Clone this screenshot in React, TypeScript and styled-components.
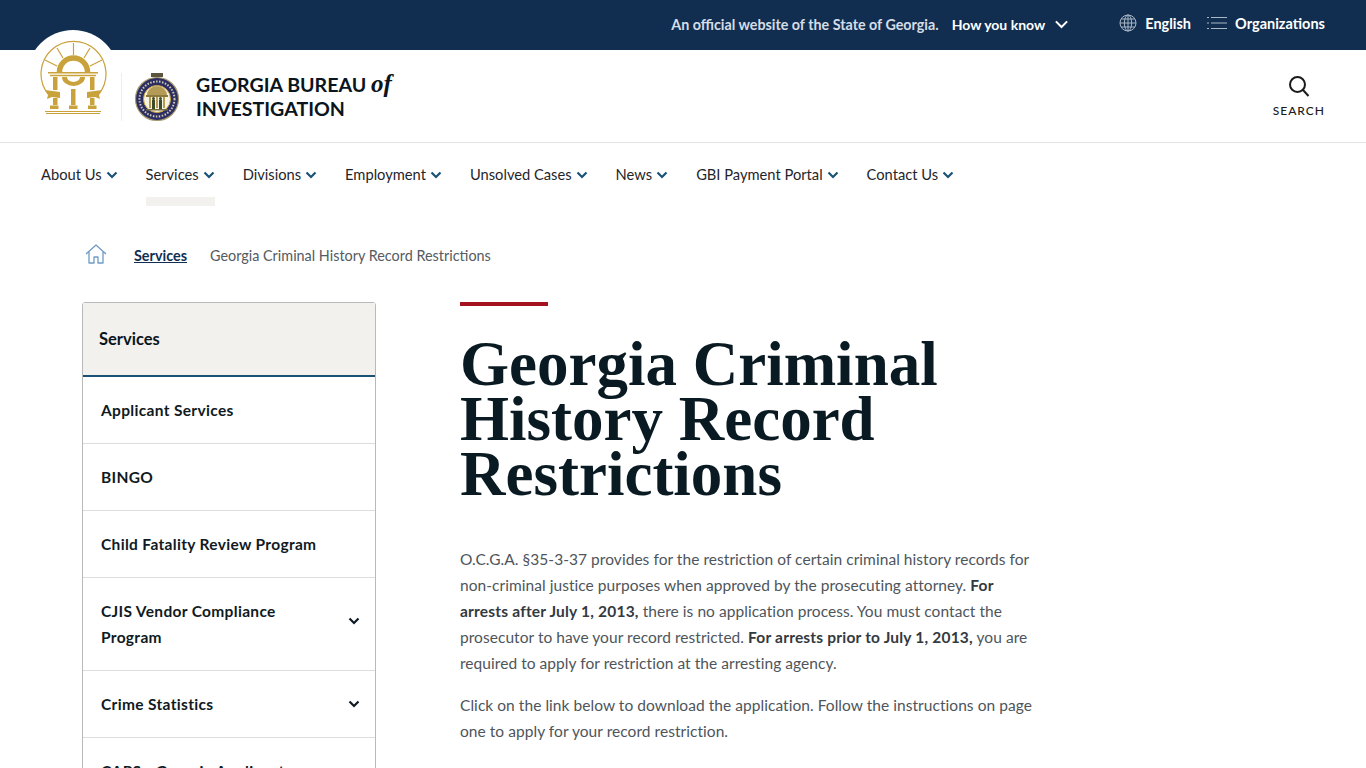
import React from "react";
import styled, { createGlobalStyle } from "styled-components";

const GlobalStyle = createGlobalStyle`
    html, body {
        margin: 0;
        padding: 0;
        height: 768px;
        overflow: hidden;
        background: #fff;
        font-family: "Lato", "Open Sans", sans-serif;
    }
`;

const TopBar = styled.div`
    height: 50px;
    box-sizing: border-box;
    padding: 0 41px 2px 0;
    background-color: #112e51;
    display: flex;
    align-items: center;
    justify-content: flex-end;
    color: #fff;
    font-size: 14px;
    font-weight: 700;
`;
const Official = styled.span`
    color: #d5dde6;
    font-size: 14.3px;
    margin: 1px 13px 0 0;
`;
const HowYouKnow = styled.span`
    display: flex;
    align-items: center;
    gap: 9px;
    margin-right: 34px;
`;
const TopLink = styled.span`
    display: flex;
    align-items: center;
    gap: 8px;
    margin-left: 16px;
    margin-top: -2px;
    font-size: 14.5px;
`;

const Header = styled.header`
    position: relative;
    height: 92px;
    border-bottom: 1px solid #e4e4e4;
    display: flex;
    align-items: center;
    justify-content: space-between;
    padding: 0 41px 0 121px;
`;
const LogoTab = styled.div`
    position: absolute;
    left: 27px;
    top: -20px;
    width: 92px;
    height: 92px;
    border-radius: 50%;
    background: #fff;
    display: flex;
    justify-content: center;
    padding: 10px 0 0 2px;
    box-sizing: border-box;
`;
const Brand = styled.div`
    display: flex;
    align-items: center;
    height: 48px;
    margin-top: 1px;
    border-left: 1px solid #eeeeee;
    padding-left: 12px;
    gap: 16px;
`;
const BrandName = styled.div`
    font-size: 19.6px;
    line-height: 24px;
    font-weight: 700;
    color: #0a1520;
    em {
        font-family: "Liberation Serif", serif;
        font-size: 25px;
        font-weight: 700;
        font-style: italic;
        line-height: 20px;
    }
`;
const SearchBox = styled.div`
    display: flex;
    flex-direction: column;
    align-items: center;
    gap: 6px;
    font-size: 12px;
    font-weight: 500;
    letter-spacing: 1px;
    color: #1b1b1b;
    margin-top: 1px;
    svg {
        margin-left: 1px;
    }
`;

const Nav = styled.nav`
    height: 63px;
    display: flex;
    padding-left: 41px;
    gap: 28px;
`;
const NavItem = styled.div<{ $active?: boolean }>`
    display: flex;
    align-items: flex-start;
    gap: 4px;
    height: 63px;
    padding-top: 22px;
    box-sizing: border-box;
    font-size: 14.7px;
    line-height: 18px;
    color: #1f262b;
    border-bottom: 9px solid ${(props) => (props.$active ? "#f3f1ed" : "transparent")};
    svg {
        margin-top: 4px;
    }
`;

const Crumbs = styled.div`
    height: 96px;
    display: flex;
    align-items: center;
    padding-left: 85px;
    padding-top: 3px;
    box-sizing: border-box;
    font-size: 14.4px;
    color: #555b61;
    svg {
        margin-top: -4px;
    }
`;
const CrumbLink = styled.span`
    font-weight: 700;
    color: #112e51;
    text-decoration: underline;
    margin: 0 23px 0 27px;
`;

const Main = styled.main`
    display: flex;
    padding-left: 82px;
    align-items: flex-start;
`;
const Sidebar = styled.aside`
    width: 294px;
    box-sizing: border-box;
    border: 1px solid #b9b9b9;
    border-radius: 3px 3px 0 0;
    margin-right: 84px;
    flex-shrink: 0;
`;
const SideHead = styled.div`
    height: 71px;
    background-color: #f3f1ed;
    border-bottom: 2px solid #1a5276;
    display: flex;
    align-items: center;
    padding: 0 0 1px 16px;
    font-size: 16.5px;
    font-weight: 700;
    color: #0a1520;
`;
const SideItem = styled.div`
    display: flex;
    align-items: center;
    justify-content: space-between;
    padding: 20px 15px 20px 18px;
    border-bottom: 1px solid #dddddd;
    font-size: 15.5px;
    line-height: 26px;
    font-weight: 700;
    color: #101a22;
    letter-spacing: 0.33px;
`;
const SideText = styled.span`
    max-width: 220px;
`;
const SideToggle = styled.span<{ $raised?: boolean }>`
    display: flex;
    margin-bottom: ${(props) => (props.$raised ? "6px" : "0")};
`;

const Article = styled.article`
    width: 578px;
`;
const RedBar = styled.div`
    width: 88px;
    height: 4px;
    background-color: #a4121f;
`;
const Title = styled.h1`
    font-family: "Liberation Serif", serif;
    font-size: 63px;
    line-height: 55px;
    font-weight: 700;
    color: #0a1a22;
    margin: 31px 0 44px;
    width: 520px;
`;
const Para = styled.p`
    font-size: 15.5px;
    line-height: 26px;
    letter-spacing: 0.05px;
    color: #4e555b;
    margin: 0 0 16px;
    b {
        color: #333a40;
        letter-spacing: 0.2px;
    }
`;

const Chevron = ({ size, color, w }: { size: number; color: string; w: number }) => (
    <svg width={size} height={size} viewBox="0 0 12 12" fill="none" stroke={color} strokeWidth={w}>
        <path d="M1.5 3.5 L6 8 L10.5 3.5" />
    </svg>
);

const Globe = () => (
    <svg width="18" height="18" viewBox="0 0 18 18" fill="none" stroke="#a9b7c6" strokeWidth="1">
        <circle cx="9" cy="9" r="8" />
        <ellipse cx="9" cy="9" rx="3.6" ry="8" />
        <path d="M9 1v16M1 9h16M2.2 5h13.6M2.2 13h13.6" />
    </svg>
);

const ListIcon = () => (
    <svg width="20" height="14" viewBox="0 0 20 14" fill="none" stroke="#a9b7c6" strokeWidth="1">
        <path d="M0 1.5h2M4 1.5h16M0 7h2M4 7h16M0 12.5h2M4 12.5h16" />
    </svg>
);

// viewBox uses page coordinates, easier to trace against the screenshot
const StateLogo = () => (
    <svg width="68" height="76" viewBox="40 40 68 76" fill="none">
        <g stroke="#c9a23c" strokeWidth="1.2">
            <path d="M48 94 A32.5 32.5 0 1 1 99 94" />
            <path d="M73.5 43 V55 M57 48 L63 58 M90 48 L84 58 M45 60 L57 66 M102 60 L90 66" />
            <path d="M45 111.5 H101 M46 113.5 H100" />
        </g>
        <g stroke="#c9a23c">
            <path d="M59.5 72 A14 14 0 0 1 87.5 72" strokeWidth="5.5" />
            <path d="M48 72.8 H98" strokeWidth="1.6" />
            <path d="M50 75.5 H96" strokeWidth="1.6" />
        </g>
        <g fill="#c9a23c">
            <path d="M62 77 H67 A6.5 5 0 0 0 80 77 H85 A11.5 9 0 0 1 62 77 Z" />
            <path d="M53 77 h4.5 v13 h-4.5z M90 77 h4.5 v13 h-4.5z M71 89 h4.5 v16 h-4.5z" />
            <path d="M45 90 L60 92 L60 98 L52 97 L47 99 L48 95z M102 90 L87 92 L87 98 L95 97 L100 99 L99 95z" />
            <path d="M53 98 h4.5 v7 h-4.5z M90 98 h4.5 v7 h-4.5z" />
            <path d="M50 105.5 h8.5 v3.5 h-8.5z M69 105.5 h8.5 v3.5 h-8.5z M88 105.5 h8.5 v3.5 h-8.5z" />
        </g>
    </svg>
);

const Seal = () => (
    <svg width="46" height="50" viewBox="134 71 46 50" fill="none">
        <path d="M151 72 h12 v4 h-12z" fill="#5b5540" />
        <circle cx="157" cy="98" r="21.5" fill="#2b2d63" stroke="#a89a6e" strokeWidth="1.2" />
        <circle cx="157" cy="98" r="17.5" stroke="#cfc9b0" strokeWidth="2" strokeDasharray="1.5 1.5" />
        <circle cx="157" cy="98" r="13.5" fill="#f7f3e2" stroke="#c9a23c" strokeWidth="1" />
        <path d="M147 94 A10 9 0 0 1 167 94z" fill="#b39a55" />
        <path d="M146 94h22v2h-22z" fill="#8c7a3d" />
        <path d="M149 96h2v11h-2z M156 96h2v11h-2z M163 96h2v11h-2z" fill="#b39a55" />
        <path d="M152 99h3v9h-3z M159 99h3v9h-3z" fill="#3f4a2a" />
        <circle cx="153.5" cy="97.5" r="1.5" fill="#3f4a2a" />
        <circle cx="160.5" cy="97.5" r="1.5" fill="#3f4a2a" />
        <path d="M146 108h22v1.5h-22z" fill="#6e6a3e" />
    </svg>
);

const HomeIcon = () => (
    <svg width="22" height="20" viewBox="0 0 22 20" fill="none" stroke="#6f9bc4" strokeWidth="1.3" strokeLinejoin="round">
        <path d="M1 10 L11 1 L21 10 M4 8 V19 H9 V13 H13 V19 H18 V8" />
    </svg>
);

const SearchIcon = () => (
    <svg width="22" height="22" viewBox="0 0 22 22" fill="none" stroke="#1b1b1b" strokeWidth="2">
        <circle cx="9.5" cy="9.5" r="7.5" />
        <path d="M15 15 L20.5 21" />
    </svg>
);

const navItems = ["About Us", "Services", "Divisions", "Employment", "Unsolved Cases", "News", "GBI Payment Portal", "Contact Us"];
const sideItems = [
    { label: "Applicant Services" },
    { label: "BINGO" },
    { label: "Child Fatality Review Program" },
    { label: "CJIS Vendor Compliance Program", more: true, twoLines: true },
    { label: "Crime Statistics", more: true },
    { label: "CAPS - Georgia Applicant Processing Service" },
];

function App() {
    return (
        <>
            <GlobalStyle />
            <TopBar>
                <Official>An official website of the State of Georgia.</Official>
                <HowYouKnow>
                    How you know <Chevron size={15} color="#fff" w={1.6} />
                </HowYouKnow>
                <TopLink>
                    <Globe /> English
                </TopLink>
                <TopLink>
                    <ListIcon /> Organizations
                </TopLink>
            </TopBar>
            <Header>
                <LogoTab>
                    <StateLogo />
                </LogoTab>
                <Brand>
                    <Seal />
                    <BrandName>
                        GEORGIA BUREAU <em>of</em>
                        <br />
                        INVESTIGATION
                    </BrandName>
                </Brand>
                <SearchBox>
                    <SearchIcon />
                    SEARCH
                </SearchBox>
            </Header>
            <Nav>
                {navItems.map((item) => (
                    <NavItem key={item} $active={item === "Services"}>
                        {item}
                        <Chevron size={12} color="#1a5276" w={2.2} />
                    </NavItem>
                ))}
            </Nav>
            <Crumbs>
                <HomeIcon />
                <CrumbLink>Services</CrumbLink>
                Georgia Criminal History Record Restrictions
            </Crumbs>
            <Main>
                <Sidebar>
                    <SideHead>Services</SideHead>
                    {sideItems.map((item) => (
                        <SideItem key={item.label}>
                            <SideText>{item.label}</SideText>
                            {item.more && (
                                <SideToggle $raised={item.twoLines}>
                                    <Chevron size={12} color="#101a22" w={2.2} />
                                </SideToggle>
                            )}
                        </SideItem>
                    ))}
                </Sidebar>
                <Article>
                    <RedBar />
                    <Title>Georgia Criminal History Record Restrictions</Title>
                    <Para>
                        O.C.G.A. §35-3-37 provides for the restriction of certain criminal history records for
                        non-criminal justice purposes when approved by the prosecuting attorney.{" "}
                        <b>For arrests after July 1, 2013,</b> there is no application process. You must contact the
                        prosecutor to have your record restricted. <b>For arrests prior to July 1, 2013,</b> you are
                        required to apply for restriction at the arresting agency.
                    </Para>
                    <Para>
                        Click on the link below to download the application. Follow the instructions on page one to
                        apply for your record restriction.
                    </Para>
                </Article>
            </Main>
        </>
    );
}

export default App;
